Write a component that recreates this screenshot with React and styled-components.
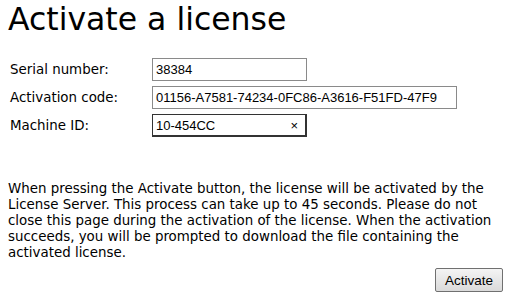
import { createGlobalStyle } from "styled-components";
import { styled } from "styled-components";

const GlobalStyle = createGlobalStyle`
  body {
    margin: 0;
    background: #ffffff;
    font-family: "DejaVu Sans", Verdana, sans-serif;
    color: #000000;
  }
`;

const Page = styled.div`
  padding: 0 16px 0 8px;
`;

const Title = styled.h1`
  margin: 0;
  font-size: 31.5px;
  font-weight: normal;
  line-height: 38px;
`;

const Form = styled.div`
  display: grid;
  grid-template-columns: 142px auto;
  row-gap: 5px;
  margin-top: 20px;
  padding-left: 2px;
  align-items: center;
`;

const Label = styled.label`
  font-size: 13.4px;
`;

const Field = styled.div`
  position: relative;
  width: ${(p) => p.$width}px;
  height: ${(p) => p.$height || 23}px;
  box-sizing: border-box;
  border: 1px solid ${(p) => (p.$focused ? "#333333" : "#8a8a8a")};
  ${(p) => p.$focused && "border-width: 1px 2px 2px 1px;"}
  background: #ffffff;
  display: flex;
  align-items: center;
  padding-left: 3px;
  font-family: "Liberation Sans", Arial, sans-serif;
  font-size: 13px;
`;

const Clear = styled.span`
  position: absolute;
  right: 7px;
  top: 50%;
  transform: translateY(-50%);
  font-size: 13px;
`;

const Text = styled.p`
  margin: 44px 0 0;
  font-size: 13.4px;
  line-height: 16px;
`;

const Actions = styled.div`
  display: flex;
  justify-content: flex-end;
  margin-top: 7px;
  margin-right: -6px;
`;

const Button = styled.button`
  width: 68px;
  height: 24px;
  border: 1px solid #707070;
  border-radius: 2px;
  background: linear-gradient(#f4f4f4, #dadada);
  font-family: "Liberation Sans", Arial, sans-serif;
  font-size: 13.5px;
  color: #000000;
  padding: 0;
`;

export default function App() {
  return (
    <>
      <GlobalStyle />
      <Page>
        <Title>Activate a license</Title>
        <Form>
          <Label>Serial number:</Label>
          <Field $width={155}>38384</Field>
          <Label>Activation code:</Label>
          <Field $width={305}>01156-A7581-74234-0FC86-A3616-F51FD-47F9</Field>
          <Label>Machine ID:</Label>
          <Field $width={155} $focused>
            10-454CC
            <Clear>×</Clear>
          </Field>
        </Form>
        <Text>
          When pressing the Activate button, the license will be activated by the
          License Server. This process can take up to 45 seconds. Please do not
          close this page during the activation of the license. When the activation
          succeeds, you will be prompted to download the file containing the
          activated license.
        </Text>
        <Actions>
          <Button>Activate</Button>
        </Actions>
      </Page>
    </>
  );
}
